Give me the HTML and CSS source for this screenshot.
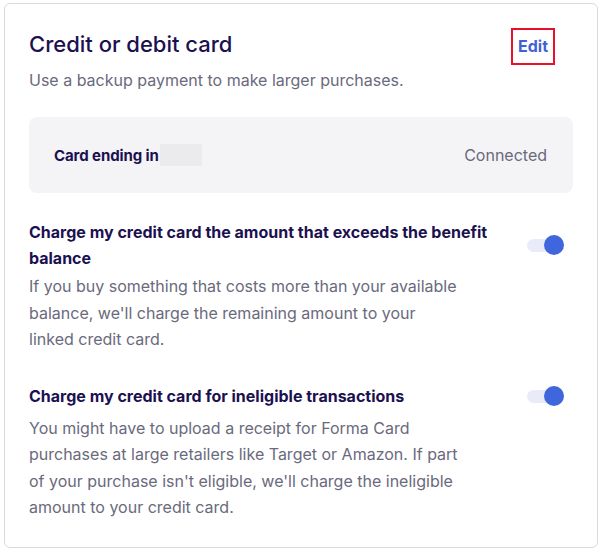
FILE: index.html
```html
<!DOCTYPE html>
<html>
<head>
<meta charset="utf-8">
<link rel="stylesheet" href="styles.css">
</head>
<body>
<section class="card">
  <header class="card-head">
    <h1 class="title">Credit or debit card</h1>
    <a class="edit" href="#">Edit</a>
  </header>
  <p class="subtitle">Use a backup payment to make larger purchases.</p>
  <div class="account">
    <div class="account-label">Card ending in<span class="mask"></span></div>
    <div class="account-status">Connected</div>
  </div>
  <div class="option">
    <div class="option-head">
      <h2 class="option-title">Charge my credit card the amount that exceeds the benefit balance</h2>
      <span class="toggle"><span class="track"></span><span class="knob"></span></span>
    </div>
    <p class="option-desc">If you buy something that costs more than your available balance, we'll charge the remaining amount to your linked credit card.</p>
  </div>
  <div class="option">
    <div class="option-head">
      <h2 class="option-title">Charge my credit card for ineligible transactions</h2>
      <span class="toggle"><span class="track"></span><span class="knob"></span></span>
    </div>
    <p class="option-desc">You might have to upload a receipt for Forma Card purchases at large retailers like Target or Amazon. If part of your purchase isn't eligible, we'll charge the ineligible amount to your credit card.</p>
  </div>
</section>
</body>
</html>
```
FILE: styles.css
```css
* { box-sizing: border-box; }
html, body { margin: 0; padding: 0; background: #fff; }
body {
  font-family: Inter, "Noto Sans", sans-serif;
  color: #1b1150;
  padding: 3px 4px 0 4px;
}
.card {
  width: 594px;
  height: 545px;
  border: 1px solid #d9d9de;
  border-radius: 6px;
  padding: 24px 24px 0 24px;
}
.card-head {
  display: flex;
  justify-content: space-between;
  align-items: flex-start;
}
.title {
  margin: 1px 0 0 0;
  font-size: 22px;
  font-weight: 500;
  line-height: 30px;
  color: #1b1150;
}
.edit {
  display: block;
  margin-right: 18px;
  padding: 5px 5px;
  border: 2px solid #e8102a;
  font-size: 16px;
  font-weight: 700;
  line-height: 23px;
  color: #4062d9;
  text-decoration: none;
}
.subtitle {
  margin: 4px 0 0 0;
  font-size: 16px;
  line-height: 22px;
  color: #6a6a7c;
}
.account {
  margin-top: 26px;
  height: 76px;
  background: #f4f4f6;
  border-radius: 8px;
  display: flex;
  align-items: center;
  justify-content: space-between;
  padding: 0 26px 0 25px;
}
.account-label {
  display: flex;
  align-items: center;
  font-size: 15px;
  font-weight: 700;
  color: #1b1150;
  letter-spacing: -0.1px;
}
.mask {
  display: inline-block;
  width: 42px;
  height: 22px;
  background: #ebebee;
  margin-left: 1px;
}
.account-status {
  font-size: 16px;
  color: #6a6a7c;
}
.account + .option { margin-top: 26px; }
.option + .option { margin-top: 26px; }
.option-head {
  display: flex;
  justify-content: space-between;
  align-items: center;
}
.option-title {
  margin: 0;
  width: 470px;
  font-size: 16px;
  font-weight: 700;
  line-height: 26px;
  color: #1b1150;
}
.option-desc {
  margin: 2px 0 0 0;
  width: 434px;
  font-size: 16px;
  line-height: 26.5px;
  color: #6a6a7c;
}
.toggle {
  position: relative;
  display: block;
  width: 37px;
  height: 34px;
  margin-right: 9px;
}
.track {
  position: absolute;
  left: 0;
  top: 11px;
  width: 34px;
  height: 13px;
  border-radius: 7px;
  background: #e9ecf8;
}
.knob {
  position: absolute;
  right: 0;
  top: 7px;
  width: 20px;
  height: 20px;
  border-radius: 50%;
  background: #4066dd;
}
```
